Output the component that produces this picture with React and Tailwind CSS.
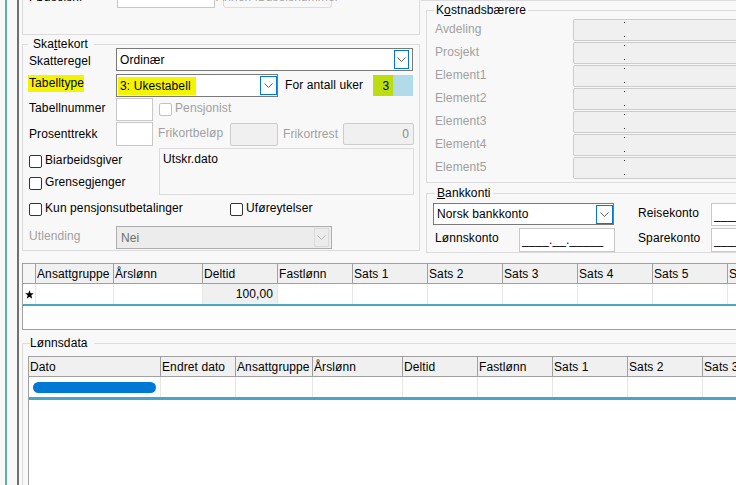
import React from "react";

const Chevron = ({ color = "#5f5f5f" }) => (
  <svg width="9" height="5" viewBox="0 0 9 5">
    <path d="M0.5 0.5 L4.5 4.5 L8.5 0.5" stroke={color} strokeWidth="1" fill="none" />
  </svg>
);

const Cb = ({ label, disabled = false, className = "" }) => (
  <div className={"flex items-start shrink-0 " + className}>
    <div
      className={
        "w-[13px] h-[13px] rounded-[2px] border bg-white shrink-0 " +
        (disabled ? "border-[#c2c2c2]" : "border-[#333333]")
      }
    />
    <span className={"ml-[3px] -mt-[2px] leading-[14px] whitespace-nowrap " + (disabled ? "text-[#a0a0a0]" : "")}>
      {label}
    </span>
  </div>
);

const Star = () => (
  <svg width="9" height="9" viewBox="0 0 10 10">
    <polygon points="5,0.3 6.2,3.6 9.8,3.7 7,5.9 8,9.6 5,7.4 2,9.6 3,5.9 0.2,3.7 3.8,3.6" fill="#000" />
  </svg>
);

const KostRow = ({ label, first = false }) => (
  <div className={"flex items-start h-[22px] pl-[8px] " + (first ? "mt-[2px]" : "mt-[1px]")}>
    <span className="w-[138px] shrink-0 mt-[3px] text-[#a0a0a0]">{label}</span>
    <div className="w-[200px] h-[22px] shrink-0 bg-[#f0f0f0] border border-[#cccccc] rounded-[2px] pl-[50px] pt-[2px] pb-[3px]">
      <div className="w-[1px] h-full flex flex-col justify-between">
        <div className="w-[1px] h-[1px] bg-[#333]" />
        <div className="w-[1px] h-[1px] bg-[#333]" />
      </div>
    </div>
  </div>
);

const H1 = ["Ansattgruppe", "Årslønn", "Deltid", "Fastlønn", "Sats 1", "Sats 2", "Sats 3", "Sats 4", "Sats 5", "Sats 6"];
const W1 = ["w-[78px]", "w-[89px]", "w-[75px]", "w-[75px]", "w-[75px]", "w-[75px]", "w-[75px]", "w-[75px]", "w-[75px]", "w-[75px]"];
const H2 = ["Dato", "Endret dato", "Ansattgruppe", "Årslønn", "Deltid", "Fastlønn", "Sats 1", "Sats 2", "Sats 3"];
const W2 = ["w-[132px]", "w-[75px]", "w-[77px]", "w-[90px]", "w-[75px]", "w-[75px]", "w-[75px]", "w-[75px]", "w-[75px]"];

export default function App() {
  return (
    <div className="w-[736px] h-[485px] overflow-hidden bg-[#f8f8f8] flex font-['Liberation_Sans',Arial,sans-serif] text-[12px] leading-[14px] tracking-[0.1px] text-black">
      {/* left strip */}
      <div className="w-[19px] h-full flex shrink-0">
        <div className="w-[5px] h-full" />
        <div className="w-[2px] h-full bg-[#55b79c]" />
        <div className="w-[10px] h-full" />
        <div className="w-[2px] h-full bg-[#707070]" />
      </div>

      {/* main */}
      <div className="flex-1 min-w-0 h-full flex flex-col">
        {/* top section */}
        <div className="flex items-start shrink-0">
          {/* left column */}
          <div className="w-[401px] shrink-0 flex flex-col">
            {/* top groupbox (cut off) */}
            <div className="ml-[3px] w-[398px] -mt-[16px] h-[51px] border-x border-b border-[#dcdcdc] flex items-start pl-[6px]">
              <span className="w-[88px] shrink-0 mt-[6px]">Fødselsnr</span>
              <div className="w-[98px] h-[23px] mt-[1px] bg-white border border-[#c8c8c8] shrink-0" />
              <div className="ml-[8px] w-[109px] h-[23px] mt-[1px] rounded-[3px] border border-[#dcdcdc] bg-[#f8f8f8] flex items-center justify-center text-[#a8a8a8] whitespace-nowrap shrink-0">
                Annen fødselsnummer
              </div>
            </div>

            {/* Skattekort */}
            <div className="mt-[9px] ml-[3px] w-[398px] h-[207px] border border-[#dcdcdc] flex flex-col">
              <div className="-mt-[8px] mb-[-3px] ml-[5px] pl-[5px] pr-[6px] bg-[#f8f8f8] w-fit leading-[14px]">
                Ska<span className="underline">t</span>tekort
              </div>

              {/* Skatteregel */}
              <div className="flex items-start h-[23px] pl-[6px]">
                <span className="w-[87px] shrink-0 mt-[6px]">Skatteregel</span>
                <div className="w-[297px] h-[23px] shrink-0 bg-white border border-[#7a7a7a] flex items-center">
                  <span className="flex-1 pl-[3px]">Ordinær</span>
                  <div className="w-[15px] h-[19px] mr-[3px] border border-[#0078d7] bg-white flex items-center justify-center">
                    <Chevron />
                  </div>
                </div>
              </div>

              {/* Tabelltype */}
              <div className="flex items-start h-[23px] pl-[6px] mt-[3px]">
                <span className="w-[87px] shrink-0 mt-[2px]">
                  <span className="bg-[#f4f400] pt-[1px] pb-[2px] pl-[1px] -ml-[1px]">Tabelltype</span>
                </span>
                <div className="w-[162px] h-[23px] shrink-0 bg-white border border-[#7a7a7a] flex items-center">
                  <span className="flex-1 pl-[1px]">
                    <span className="bg-[#f4f400] pl-[2px] pr-[5px] pt-[2px] pb-[2px]">3: Ukestabell</span>
                  </span>
                  <div className="w-[17px] h-[19px] border border-[#0078d7] bg-white flex items-center justify-center">
                    <Chevron />
                  </div>
                </div>
                <span className="ml-[7px] w-[88px] shrink-0 mt-[4px] whitespace-nowrap">For antall uker</span>
                <div className="mt-[1px] w-[40px] h-[21px] shrink-0 bg-[#b2dbe9] flex">
                  <div className="w-[20px] h-full bg-[#bedd10] flex items-center justify-center pl-[6px]">3</div>
                </div>
              </div>

              {/* Tabellnummer */}
              <div className="flex items-start h-[23px] pl-[6px] mt-[1px]">
                <span className="w-[87px] shrink-0 mt-[3px]">Tabellnummer</span>
                <div className="w-[37px] h-[23px] shrink-0 bg-white border border-[#c8c8c8]" />
                <Cb label="Pensjonist" disabled className="ml-[6px] mt-[5px]" />
              </div>

              {/* Prosenttrekk */}
              <div className="flex items-start h-[24px] pl-[6px] mt-[1px]">
                <span className="w-[87px] shrink-0 mt-[5px]">Prosenttrekk</span>
                <div className="w-[37px] h-[24px] shrink-0 bg-white border border-[#c8c8c8]" />
                <span className="ml-[5px] w-[72px] shrink-0 mt-[4px] text-[#a0a0a0]">Frikortbeløp</span>
                <div className="w-[48px] h-[23px] mt-[1px] shrink-0 bg-[#f0f0f0] border border-[#cccccc] rounded-[2px]" />
                <span className="ml-[5px] w-[60px] shrink-0 mt-[5px] text-[#a0a0a0]">Frikortrest</span>
                <div className="w-[71px] h-[22px] mt-[1px] shrink-0 bg-[#f0f0f0] border border-[#cccccc] rounded-[2px] flex items-center justify-end pr-[4px] text-[#8a8a8a]">
                  0
                </div>
              </div>

              {/* Biarbeidsgiver / Grensegjenger / Utskr.dato */}
              <div className="flex items-start h-[47px] pl-[6px] mt-[2px]">
                <div className="w-[130px] shrink-0 flex flex-col">
                  <Cb label="Biarbeidsgiver" className="mt-[7px]" />
                  <Cb label="Grensegjenger" className="mt-[9px]" />
                </div>
                <div className="w-[255px] h-[47px] shrink-0 border border-[#dcdcdc] pl-[3px] pt-[3px]">Utskr.dato</div>
              </div>

              {/* Kun pensjonsutbetalinger */}
              <div className="flex items-start h-[13px] pl-[6px] mt-[8px]">
                <Cb label="Kun pensjonsutbetalinger" className="w-[201px]" />
                <Cb label="Uføreytelser" />
              </div>

              {/* Utlending */}
              <div className="flex items-start h-[23px] pl-[6px] mt-[10px]">
                <span className="w-[87px] shrink-0 mt-[3px] text-[#a0a0a0]">Utlending</span>
                <div className="w-[216px] h-[23px] shrink-0 bg-[#ececec] border border-[#adadad] flex items-center">
                  <span className="flex-1 pl-[4px] text-[#6d6d6d]">Nei</span>
                  <div className="w-[15px] h-[19px] mr-[2px] border border-[#dadada] flex items-center justify-center">
                    <Chevron color="#b4b4b4" />
                  </div>
                </div>
              </div>
            </div>
          </div>

          {/* right column */}
          <div className="flex-1 min-w-0 flex flex-col">
            <div className="ml-[1px] h-[1px] bg-[#dcdcdc]" />

            {/* Kostnadsbærere */}
            <div className="mt-[9px] ml-[6px] w-[400px] h-[173px] border-l border-t border-b border-[#dcdcdc] flex flex-col">
              <div className="-mt-[8px] ml-[7px] px-[2px] bg-[#f8f8f8] w-fit">
                K<span className="underline">o</span>stnadsbærere
              </div>
              <KostRow label="Avdeling" first />
              <KostRow label="Prosjekt" />
              <KostRow label="Element1" />
              <KostRow label="Element2" />
              <KostRow label="Element3" />
              <KostRow label="Element4" />
              <KostRow label="Element5" />
            </div>

            {/* Bankkonti */}
            <div className="mt-[10px] ml-[6px] w-[400px] h-[60px] border-l border-t border-b border-[#dcdcdc] flex flex-col">
              <div className="-mt-[8px] ml-[8px] px-[2px] bg-[#f8f8f8] w-fit">
                <span className="underline">B</span>ankkonti
              </div>
              <div className="flex items-start h-[23px] mt-[3px] pl-[6px]">
                <div className="w-[181px] h-[22px] shrink-0 bg-white border border-[#7a7a7a] flex items-center">
                  <span className="flex-1 pl-[3px]">Norsk bankkonto</span>
                  <div className="w-[17px] h-[19px] border border-[#0078d7] bg-white flex items-center justify-center">
                    <Chevron />
                  </div>
                </div>
                <span className="ml-[24px] w-[73px] shrink-0 mt-[3px]">Reisekonto</span>
                <div className="w-[100px] h-[23px] shrink-0 bg-white border border-[#c8c8c8] flex items-center pl-[2px] overflow-hidden whitespace-nowrap">
                  ____.__._____
                </div>
              </div>
              <div className="flex items-start h-[24px] mt-[2px] pl-[8px]">
                <span className="w-[84px] shrink-0 mt-[3px]">Lønnskonto</span>
                <div className="w-[96px] h-[24px] shrink-0 bg-white border border-[#c8c8c8] flex items-center pl-[2px] whitespace-nowrap">
                  ____.__._____
                </div>
                <span className="ml-[23px] w-[73px] shrink-0 mt-[3px]">Sparekonto</span>
                <div className="w-[100px] h-[24px] shrink-0 bg-white border border-[#c8c8c8] flex items-center pl-[2px] overflow-hidden whitespace-nowrap">
                  ____.__._____
                </div>
              </div>
            </div>
          </div>
        </div>

        {/* Grid 1 */}
        <div className="mt-[10px] ml-[3px] h-[67px] shrink-0 border-l border-t border-b border-[#a0a0a0] bg-white flex flex-col overflow-hidden">
          <div className="flex h-[20px] shrink-0 border-b border-[#a0a0a0] bg-[#f0f0f0]">
            <div className="w-[13px] shrink-0 border-r border-[#a0a0a0] bg-[#f5f5f5]" />
            {H1.map((h, i) => (
              <div key={i} className={W1[i] + " shrink-0 border-r border-[#a0a0a0] flex items-center pl-[1px] whitespace-nowrap overflow-hidden"}>
                {h}
              </div>
            ))}
          </div>
          <div className="flex h-[20px] shrink-0">
            <div className="w-[13px] shrink-0 border-r border-[#e6e6e6] flex items-center justify-center pt-[1px]">
              <Star />
            </div>
            {H1.map((h, i) => (
              <div
                key={i}
                className={
                  W1[i] +
                  " shrink-0 border-r border-[#e6e6e6] flex items-center justify-end pr-[4px] " +
                  (i === 2 ? "bg-[#f0f0f0]" : "")
                }
              >
                {i === 2 ? "100,00" : ""}
              </div>
            ))}
          </div>
          <div className="h-[2px] shrink-0 bg-[#47a6c6]" />
        </div>

        {/* Lønnsdata */}
        <div className="mt-[13px] ml-[3px] flex-1 min-h-0 border-l border-t border-[#dcdcdc] flex flex-col">
          <div className="-mt-[8px] ml-[7px] pr-[6px] bg-[#f8f8f8] w-fit">Lønnsdata</div>
          <div className="mt-[6px] ml-[5px] flex-1 border-l border-t border-[#a0a0a0] bg-white flex flex-col overflow-hidden">
            <div className="flex h-[20px] shrink-0 border-b border-[#a0a0a0] bg-[#f0f0f0]">
              {H2.map((h, i) => (
                <div key={i} className={W2[i] + " shrink-0 border-r border-[#a0a0a0] flex items-center pl-[1px] whitespace-nowrap overflow-hidden"}>
                  {h}
                </div>
              ))}
            </div>
            <div className="flex h-[20px] shrink-0">
              {H2.map((h, i) => (
                <div key={i} className={W2[i] + " shrink-0 border-r border-[#e6e6e6] flex items-center pl-[4px]"}>
                  {i === 0 ? <div className="w-[123px] h-[11px] rounded-full bg-[#0078d4]" /> : null}
                </div>
              ))}
            </div>
            <div className="h-[3px] shrink-0 bg-[#47a6c6]" />
          </div>
        </div>
      </div>
    </div>
  );
}
